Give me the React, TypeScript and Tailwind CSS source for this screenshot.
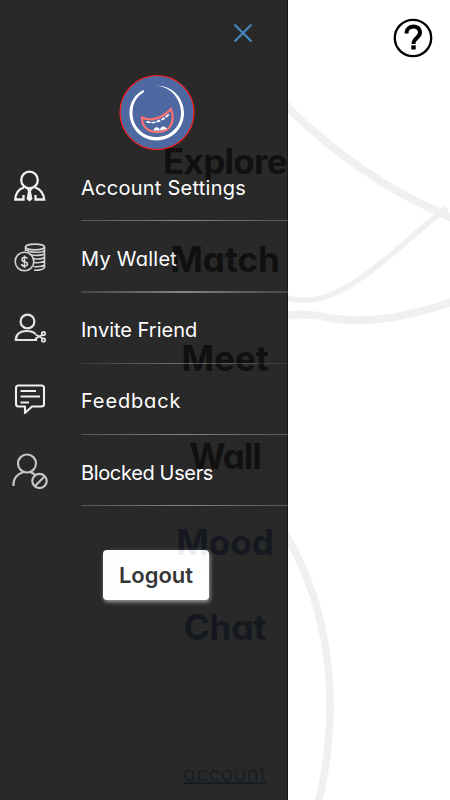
import React from "react";

const FONT = "font-['Inter','Lato','Liberation_Sans',sans-serif] [font-feature-settings:'cv11']";

function BackgroundCurves() {
  return (
    <svg className="absolute inset-0" width="450" height="800" viewBox="0 0 450 800" fill="none">
      <g stroke="#f7f7f7">
        <path d="M212 0C238 45 260 79 288 107" strokeWidth="9" />
        <path d="M236 205C240 240 256 298 290 299" strokeWidth="5" />
        <path d="M286 316C253 321 226 337 216 355C196 399 190 448 195 510C198 560 240 650 258 700C272 738 278 772 279 800" strokeWidth="7" />
        <path d="M0 20C48 34 88 49 112 79" strokeWidth="9" />
        <path d="M2 482C38 460 73 428 86 414S145 368 196 362" strokeWidth="6" />
        <path d="M68 435C67 512 112 536 114 568S98 642 98 800" strokeWidth="7" />
        <path d="M48 527C-2 607 15 677 26 706S32 767 21 800" strokeWidth="7" />
        <path d="M226 370C234 401 247 437 247 500S253 594 243 620" strokeWidth="7" />
      </g>
      <g stroke="#f0f0f0">
        <path d="M286 106C333 152 387 191 452 218" strokeWidth="8" />
        <path d="M286 297C293 300 301 301 311 300C356 296 410 234 447 208" strokeWidth="5.500" />
        <path d="M452 302C407 317 373 323 336 319C316 315 303 313 286 316" strokeWidth="8" />
        <path d="M284 532C325 598 335 680 328 745Q325 778 318 802" strokeWidth="7.500" />
      </g>
    </svg>
  );
}

function Avatar() {
  return (
    <svg width="76" height="76" viewBox="0 0 76 76" fill="none">
      <circle cx="38" cy="38.500" r="37" fill="#3b5998" stroke="#f00" strokeWidth="1.200" />
      <path d="M23.500 16.500C16 20.500 10.500 28 10.500 39C10.500 54 22.500 66.500 37.500 66.500C53 66.500 65 54 65 39C65 23 52 11 37 11.800C51 12.500 62 24 62 39C62 52.500 51.500 63 37.500 63C24 63 13.500 52.500 13.500 39C13.500 29 18 22.500 24 18.700C26 17 25 15.700 23.500 16.500Z" fill="#fff" />
      <path d="M23 43.500C33 48.500 44 43 52 35C57 49 50 58 39 58C29 58 23 53 23 43.500Z" stroke="#ff6161" strokeWidth="2.200" />
      <path d="M27 47L31 47.500L32 49L28 49ZM32 48L36 47.500L37 49L33 49.500ZM37 47L41 45.500L41.500 47.500L38 48.500ZM42 45L45 43L46 45L43 46.500ZM46 42.500L49.500 39.500L50 41.500L47 44Z" fill="#fff" />
      <path d="M34.500 56.500C35 52 40.500 52 41 56.500ZM41 56.500C41 51.500 46.500 51.500 48 55Z" fill="#fff" />
    </svg>
  );
}

function AccountIcon() {
  return (
    <svg width="36" height="36" viewBox="0 0 36 36" fill="none" stroke="#f0f0f0" strokeWidth="2.300">
      <circle cx="17.500" cy="12" r="8.300" />
      <path d="M12 19.500C7 21 3.500 25 3.300 31.500H11.500V27M23 19.500C28 21 31.500 25 32.200 31.500H23.500V27" />
      <path d="M15 21H20L19 23.500L20.500 31L17.500 33.500L14.500 31L16 23.500Z" fill="#eee" stroke="none" />
    </svg>
  );
}

function WalletIcon() {
  return (
    <svg width="36" height="36" viewBox="0 0 36 36" fill="none" stroke="#d0d0d0" strokeWidth="1.600">
      <ellipse cx="23" cy="8" rx="9.500" ry="2.900" />
      <path d="M13.500 8V12M32.500 8V28C32.500 30 28 31.500 22 31.300M14.500 11C17 14 30 14 32.500 11.500M18 15.500C23 17 30 16.500 32.500 15M20.500 19.500C25 20.300 30 20 32.500 18.500M22 23.500C26 24 30 23.500 32.500 22M21.500 27.500C26 28 30 27.500 32.500 26" />
      <circle cx="12.500" cy="22.500" r="9.300" />
      <path d="M15.500 19.500C14.500 17.500 9.500 18 10 21C10.500 23.500 15.500 22 15.500 25C15.500 27.500 10 28 9.500 25M12.500 16.500V29" strokeWidth="1.600" />
    </svg>
  );
}

function InviteIcon() {
  return (
    <svg width="36" height="36" viewBox="0 0 36 36" fill="none" stroke="#e0e0e0" strokeWidth="2.200">
      <circle cx="15.500" cy="11.500" r="6.900" />
      <path d="M23.500 24C21 21.500 18 21 15 21C8 21 3.800 24 3.800 30H24V28" />
      <path d="M23.500 24.500L31 28.500M23.500 28.500L31 24.500" strokeWidth="1.900" />
      <circle cx="31.500" cy="23.500" r="1.700" strokeWidth="1.700" />
      <circle cx="31.500" cy="30" r="1.700" strokeWidth="1.700" />
    </svg>
  );
}

function FeedbackIcon() {
  return (
    <svg width="36" height="36" viewBox="0 0 36 36" fill="none" stroke="#eee" strokeWidth="2.100">
      <path d="M6.500 3.500H29.500Q32 3.500 32 6V22Q32 24.500 29.500 24.500H20L13 31V24.500H6.500Q4 24.500 4 22V6Q4 3.500 6.500 3.500Z" strokeLinejoin="round" />
      <path d="M8.500 9H24M8.500 14.500H28M8.500 20.500H17" />
    </svg>
  );
}

function BlockedIcon() {
  return (
    <svg width="36" height="40" viewBox="0 0 36 40" fill="none" stroke="#c0c0c0" strokeWidth="2.200">
      <circle cx="15" cy="12.500" r="9" />
      <path d="M1.500 35C1 27 6 22.500 11 21.500M19 21.500L23 23.500" />
      <circle cx="27.500" cy="30" r="7.200" />
      <path d="M23 35L32.500 25.500" />
    </svg>
  );
}

function MenuRow({ icon, label, tone, text }: { icon: React.ReactNode; label: string; tone: string; text: string }) {
  return (
    <div className="flex h-[71.3px]">
      <div className="flex w-[81px] items-center pl-3">{icon}</div>
      <div className="flex flex-1 flex-col justify-between">
        <span className={`whitespace-nowrap text-[20px] leading-[32px] text-white ${text}`}>{label}</span>
        <div className={`shrink-0 bg-linear-to-r ${tone}`} />
      </div>
    </div>
  );
}

const ghost = "text-[35px] font-bold leading-[40px]";

export default function App() {
  return (
    <div className={`relative h-[800px] w-[450px] overflow-hidden bg-white ${FONT}`}>
      <BackgroundCurves />
      <main className="relative flex h-full flex-col items-center text-black">
        <div className="flex w-full justify-end pr-[17px] pt-[18px]">
          <svg width="40" height="40" viewBox="0 0 40 40" fill="none" stroke="#000">
            <circle cx="20" cy="20" r="18.200" strokeWidth="2.300" />
            <path d="M13.500 15.500C13 6.500 27 6 27 14.500C27 20 20.500 19.500 20.500 26" strokeWidth="4" />
            <path d="M20.500 27.300V31.500" strokeWidth="4.400" />
          </svg>
        </div>
        <div className="flex flex-col items-center pt-[83px]">
          <span className={`${ghost} h-[98px] tracking-[-0.7px]`}>Explore</span>
          <span className={`${ghost} h-[99px]`}>Match</span>
          <span className={`${ghost} h-[98px]`}>Meet</span>
          <span className={`${ghost} h-[86px] tracking-[-1px]`}>Wall</span>
          <span className={`${ghost} h-[85px] text-[#3b5998]`}>Mood</span>
          <span className={`${ghost} text-[#3b5998]`}>Chat</span>
        </div>
        <a className="mt-[113px] text-[20px] font-light leading-[28px] tracking-[1.100px] text-[#337ab7] underline">account</a>
      </main>

      <aside className="absolute left-0 top-0 flex h-full w-[288px] flex-col border-r border-black bg-[#121212] opacity-90">
        <div className="flex h-[74px] justify-end pr-[34px] pt-[23px]">
          <svg width="20" height="20" viewBox="0 0 20 20" stroke="#337ab7" strokeWidth="2.200">
            <path d="M1.500 1.500L18.500 18.500M18.500 1.500L1.500 18.500" />
          </svg>
        </div>
        <div className="flex h-[76px] pl-[118.500px]">
          <Avatar />
        </div>
        <nav className="w-[288px]">
          <MenuRow icon={<AccountIcon />} label="Account Settings" text="pt-[22px] tracking-[0.250px]" tone="h-px from-[#444] via-[#777] to-[#444]" />
          <MenuRow icon={<WalletIcon />} label="My Wallet" text="pt-[22px] tracking-[0.250px]" tone="h-0.5 from-[#333] via-[#777] to-[#333]" />
          <MenuRow icon={<InviteIcon />} label="Invite Friend" text="pt-[21px]" tone="h-px from-[#222] via-[#666] to-[#222]" />
          <MenuRow icon={<FeedbackIcon />} label="Feedback" text="pt-[21px] tracking-[0.850px]" tone="h-px from-[#444] via-[#777] to-[#444]" />
          <MenuRow icon={<BlockedIcon />} label="Blocked Users" text="pt-[22px] tracking-[-0.350px]" tone="h-px from-[#444] via-[#777] to-[#444]" />
        </nav>
        <div className="flex pl-[103px] pt-[43.500px]">
          <button className="h-[50px] w-[106px] rounded-[4px] bg-white pt-0.5 text-[22px] font-semibold text-[#222] shadow-[1px_2px_4px_#999]">Logout</button>
        </div>
      </aside>
    </div>
  );
}
